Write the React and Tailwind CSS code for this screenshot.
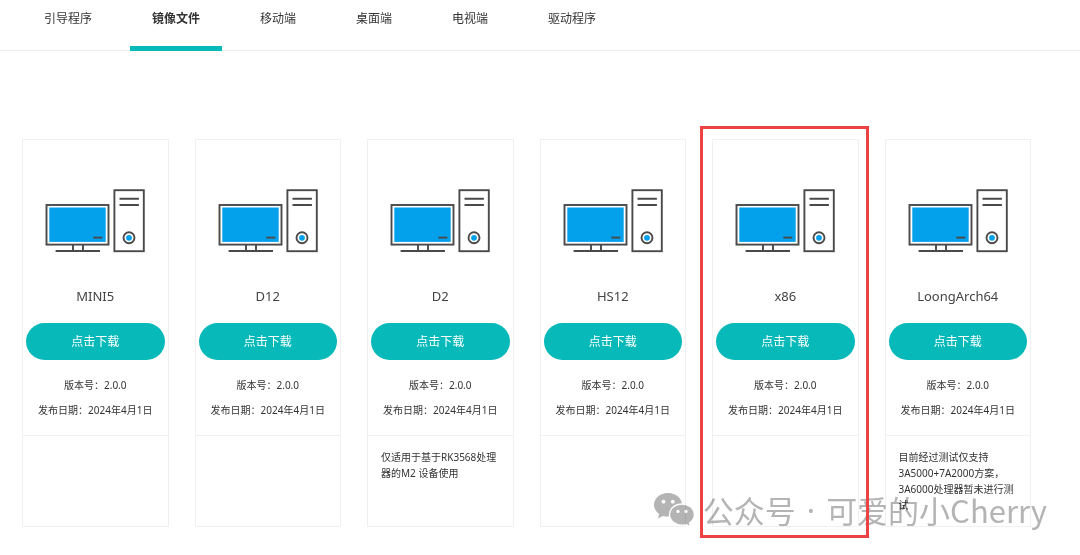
import React from "react";

const tabs = ["引导程序", "镜像文件", "移动端", "桌面端", "电视端", "驱动程序"];

const cards = [
  { name: "MINI5" },
  { name: "D12" },
  { name: "D2", note: "仅适用于基于RK3568处理器的M2 设备使用" },
  { name: "HS12" },
  { name: "x86", marked: true },
  {
    name: "LoongArch64",
    note: "目前经过测试仅支持3A5000+7A2000方案，3A6000处理器暂未进行测试",
  },
];

function ComputerIcon() {
  return (
    <svg
      viewBox="0 0 100 64"
      className="mx-auto block h-16 w-[100px]"
      fill="none"
      stroke="#4a4a4c"
      strokeWidth="1.9"
      aria-hidden="true"
    >
      <rect x="1.5" y="16" width="62" height="39.6" />
      <rect x="4.3" y="18.5" width="56.4" height="34.4" fill="#03a1eb" stroke="none" />
      <path d="M48.300 48.600h9" />
      <path d="M28 56v5.500M38 56v5.500M10.600 62h44.400" />
      <rect x="69.400" y="1.200" width="29.400" height="61" />
      <path d="M74.500 9.800h19.400M74.500 16h19.400" />
      <circle cx="84" cy="48.800" r="5.500" />
      <circle cx="84" cy="48.800" r="2.900" fill="#03a1eb" stroke="none" />
    </svg>
  );
}

function Card({ name, note, marked }) {
  return (
    <article className="relative flex flex-col border border-[#f0f0f0]">
      <div className="border-b border-[#f0f0f0] px-[3px] pt-[49px] pb-3 text-center">
        <ComputerIcon />
        <h2 className="mt-[33px] text-[13px] leading-5 text-[#444]">{name}</h2>
        <button
          type="button"
          className="mt-[17px] h-[37px] w-full rounded-full bg-[#07b9b9] text-xs text-white"
        >
          点击下载
        </button>
        <p className="mt-[13px] text-[10px] leading-[25px]">版本号：2.0.0</p>
        <p className="text-[10px] leading-[25px]">发布日期：2024年4月1日</p>
      </div>
      <p className="min-h-[90px] px-[13px] pt-[13px] text-[10px] leading-4">{note}</p>
      {marked && (
        <span className="pointer-events-none absolute -top-3.5 -right-[11px] -bottom-3 -left-[13px] z-10 border-3 border-[#ec4243]" />
      )}
    </article>
  );
}

function Watermark() {
  return (
    <div className="pointer-events-none absolute right-[33px] bottom-[27px] flex items-center gap-2 text-[#b4b4b4] mix-blend-multiply">
      <svg viewBox="0 0 42 36" className="h-9 w-[42px]" fill="currentColor" aria-hidden="true">
        <path d="M15 1C7 1 1 6.200 1 12.800c0 3.700 2 6.900 5.200 9.100L5 26.400l5-2.500c1.600.500 3.300.700 5 .700C23 24.600 29 19.400 29 12.800S23 1 15 1z" />
        <path
          d="M29 12c-7 0-12.500 4.700-12.500 10.600S22 33.200 29 33.200c1.500 0 2.900-.200 4.200-.600l4.300 2.300-1-3.900c3-1.900 4.900-4.900 4.900-8.400C41.400 16.700 36 12 29 12z"
          stroke="#fff"
          strokeWidth="1.300"
        />
        <g fill="#fff">
          <circle cx="10.500" cy="9.700" r="1.900" />
          <circle cx="19.800" cy="9.700" r="1.900" />
          <circle cx="25" cy="19.400" r="1.600" />
          <circle cx="33" cy="19.400" r="1.600" />
        </g>
      </svg>
      <p className="flex gap-[11px] font-['Noto_Sans_CJK_SC',sans-serif] text-[31px] leading-9 whitespace-nowrap">
        <span>公众号</span>
        <span className="font-['Noto_Sans',sans-serif]">·</span>
        <span>可爱的小Cherry</span>
      </p>
    </div>
  );
}

export default function App() {
  return (
    <div className="relative bg-white pb-7 font-['Noto_Sans','Noto_Sans_CJK_SC',sans-serif] text-[#333]">
      <nav className="flex gap-4 border-b border-[#eee] pl-[22px]">
        {tabs.map((tab, i) => (
          <a
            key={tab}
            href="#"
            aria-current={i === 1 ? "page" : undefined}
            className={
              i === 1
                ? "-mb-px border-b-[5px] border-[#07b9b9] px-[22px] pt-[9px] pb-[17px] text-xs leading-5 font-bold"
                : "-mb-px border-b-[5px] border-transparent px-[22px] pt-[9px] pb-[17px] text-xs leading-5"
            }
          >
            {tab}
          </a>
        ))}
      </nav>
      <main className="grid grid-cols-6 gap-[26px] pt-[88px] pr-[49px] pl-[22px]">
        {cards.map((card) => (
          <Card key={card.name} {...card} />
        ))}
      </main>
      <Watermark />
    </div>
  );
}
